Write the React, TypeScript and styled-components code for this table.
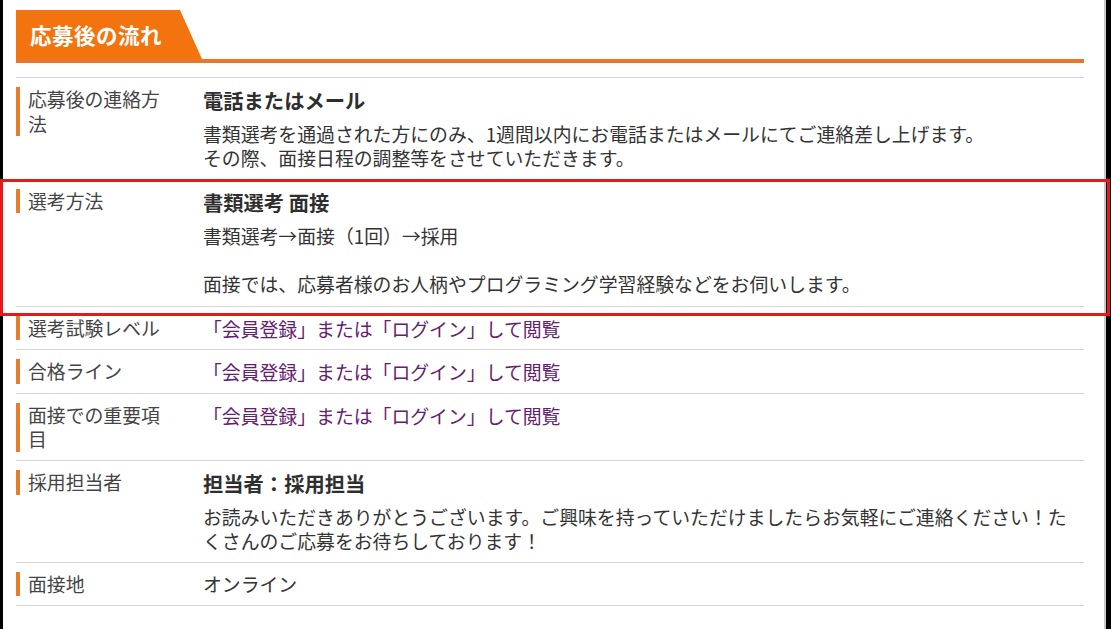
import React from "react";
import styled, { createGlobalStyle } from "styled-components";

const GlobalStyle = createGlobalStyle`
  html, body {
    margin: 0;
    padding: 0;
    background: #000;
  }
  body {
    font-family: "Noto Sans CJK JP", "Noto Sans", sans-serif;
  }
`;

const Frame = styled.div`
  position: relative;
  box-sizing: border-box;
  width: 1111px;
  height: 629px;
  overflow: hidden;
  background: #000;
  padding: 0 5px 0 3px;
  display: flex;
`;

const Panel = styled.main`
  flex: 1;
  background: #fff;
  border-right: 2px solid #c9c9c9;
  padding: 10px 20px 0 13px;
`;

const SectionHead = styled.div`
  display: flex;
  border-bottom: 4px solid #e8772c;
`;

const Tab = styled.h2`
  margin: 0;
  width: 186px;
  height: 49px;
  box-sizing: border-box;
  padding-left: 14px;
  display: flex;
  align-items: center;
  background: #f3740f;
  color: #fff;
  font-size: 21.5px;
  font-weight: 700;
  letter-spacing: 0.5px;
  clip-path: polygon(0 0, 164px 0, 186px 100%, 0 100%);
`;

const Table = styled.dl`
  margin: 14px 0 0;
  border-top: 1px solid #d7d7d7;
`;

const Row = styled.div<{ $tall?: boolean }>`
  display: grid;
  grid-template-columns: 187px 1fr;
  padding: ${(p) => (p.$tall ? "9px 0 10px" : "9px 0 8.5px")};
  border-bottom: 1px solid #d7d7d7;
`;

const Label = styled.dt`
  align-self: start;
  width: 140px;
  border-left: 4px solid #e47d2c;
  padding-left: 8px;
  font-size: 18.85px;
  line-height: 24.5px;
  color: #444;
`;

const Value = styled.dd`
  margin: 0;
  font-size: 18.85px;
  line-height: 24px;
  color: #333;
`;

const Title = styled.div`
  font-size: 20.3px;
  font-weight: 700;
  line-height: 26px;
  color: #2e2e2e;
  margin-bottom: 9px;
`;

const Body = styled.p`
  margin: 0;
  white-space: pre-line;
`;

const Link = styled.a`
  color: #64206f;
  text-decoration: none;
  line-height: 25px;
`;

const Highlight = styled.div`
  position: absolute;
  left: 0;
  top: 179px;
  width: 1110px;
  height: 137px;
  box-sizing: border-box;
  border: 3.5px solid #e6171d;
  pointer-events: none;
`;

const LOGIN = "「会員登録」または「ログイン」して閲覧";

export default function App() {
  return (
    <>
      <GlobalStyle />
      <Frame>
        <Panel>
          <SectionHead>
            <Tab>応募後の流れ</Tab>
          </SectionHead>
          <Table>
            <Row>
              <Label>応募後の連絡方法</Label>
              <Value>
                <Title>電話またはメール</Title>
                <Body>
                  {"書類選考を通過された方にのみ、1週間以内にお電話またはメールにてご連絡差し上げます。\nその際、面接日程の調整等をさせていただきます。"}
                </Body>
              </Value>
            </Row>
            <Row $tall>
              <Label>選考方法</Label>
              <Value>
                <Title>書類選考 面接</Title>
                <Body>
                  {"書類選考→面接（1回）→採用\n\u00a0\n面接では、応募者様のお人柄やプログラミング学習経験などをお伺いします。"}
                </Body>
              </Value>
            </Row>
            <Row>
              <Label>選考試験レベル</Label>
              <Value>
                <Link href="#">{LOGIN}</Link>
              </Value>
            </Row>
            <Row>
              <Label>合格ライン</Label>
              <Value>
                <Link href="#">{LOGIN}</Link>
              </Value>
            </Row>
            <Row>
              <Label>面接での重要項目</Label>
              <Value>
                <Link href="#">{LOGIN}</Link>
              </Value>
            </Row>
            <Row>
              <Label>採用担当者</Label>
              <Value>
                <Title>担当者：採用担当</Title>
                <Body>
                  お読みいただきありがとうございます。ご興味を持っていただけましたらお気軽にご連絡ください！たくさんのご応募をお待ちしております！
                </Body>
              </Value>
            </Row>
            <Row>
              <Label>面接地</Label>
              <Value>オンライン</Value>
            </Row>
          </Table>
        </Panel>
        <Highlight />
      </Frame>
    </>
  );
}
